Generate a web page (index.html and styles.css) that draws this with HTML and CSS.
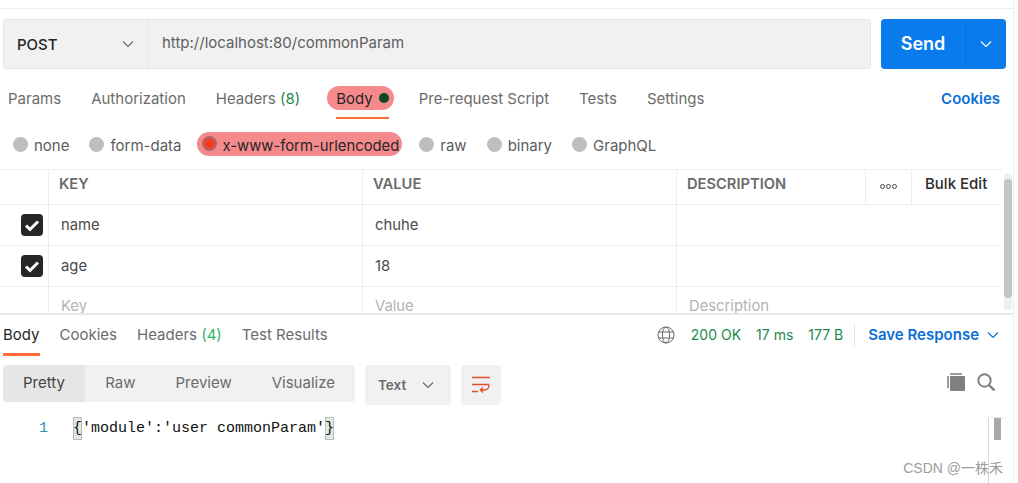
FILE: index.html
```html
<!DOCTYPE html>
<html>
<head>
	<meta charset="utf-8">
	<title>Postman request</title>
	<link rel="stylesheet" href="styles.css">
</head>
<body>
	<div class="page">
		<div class="url-row">
			<div class="url-bar">
				<div class="method">
					<span>POST</span>
					<svg class="chev" width="12" height="12" viewBox="0 0 12 12"><path d="M1 3.500l5 5 5-5"/></svg>
				</div>
				<div class="url">http://localhost:80/commonParam</div>
			</div>
			<div class="send">
				<span class="send-text">Send</span>
				<span class="send-more"><svg class="chev" width="12" height="12" viewBox="0 0 12 12"><path d="M1 3.500l5 5 5-5"/></svg></span>
			</div>
		</div>

		<div class="req-tabs">
			<span class="tab">Params</span>
			<span class="tab">Authorization</span>
			<span class="tab">Headers <em class="count">(8)</em></span>
			<span class="tab tab-body"><span class="mark">Body <i class="dot"></i></span></span>
			<span class="tab">Pre-request Script</span>
			<span class="tab">Tests</span>
			<span class="tab">Settings</span>
			<span class="cookies">Cookies</span>
		</div>

		<div class="radios">
			<span class="radio"><i></i>none</span>
			<span class="radio"><i></i>form-data</span>
			<span class="radio on"><i></i>x-www-form-urlencoded</span>
			<span class="radio"><i></i>raw</span>
			<span class="radio"><i></i>binary</span>
			<span class="radio"><i></i>GraphQL</span>
		</div>

		<div class="table-wrap">
			<div class="table">
				<div class="row head">
					<div class="cell"></div>
					<div class="cell">KEY</div>
					<div class="cell">VALUE</div>
					<div class="cell">DESCRIPTION</div>
					<div class="cell dots"><span></span><span></span><span></span></div>
					<div class="cell bulk">Bulk Edit</div>
				</div>
				<div class="row">
					<div class="cell check"><svg width="22" height="22" viewBox="0 0 22 22"><rect width="22" height="22" rx="4" fill="#262626"/><path d="M5 11.500l4 4 8-8" fill="none" stroke="#fff" stroke-width="3"/></svg></div>
					<div class="cell">name</div>
					<div class="cell">chuhe</div>
					<div class="cell wide"></div>
				</div>
				<div class="row">
					<div class="cell check"><svg width="22" height="22" viewBox="0 0 22 22"><rect width="22" height="22" rx="4" fill="#262626"/><path d="M5 11.500l4 4 8-8" fill="none" stroke="#fff" stroke-width="3"/></svg></div>
					<div class="cell">age</div>
					<div class="cell">18</div>
					<div class="cell wide"></div>
				</div>
				<div class="row ghost">
					<div class="cell"></div>
					<div class="cell">Key</div>
					<div class="cell">Value</div>
					<div class="cell wide">Description</div>
				</div>
			</div>
			<div class="scroll"><div class="thumb"></div></div>
		</div>

		<div class="res-tabs">
			<span class="tab active">Body</span>
			<span class="tab">Cookies</span>
			<span class="tab">Headers <em class="count light">(4)</em></span>
			<span class="tab">Test Results</span>
			<div class="status">
				<svg class="globe" width="18" height="18" viewBox="0 0 18 18"><circle cx="9" cy="9" r="8"/><ellipse cx="9" cy="9" rx="3.600" ry="8"/><path d="M1.600 6h14.800M1.600 12h14.800"/></svg>
				<span>200 OK</span>
				<span>17 ms</span>
				<span>177 B</span>
				<span class="save">Save Response <svg class="chev" width="12" height="12" viewBox="0 0 12 12"><path d="M1 3.500l5 5 5-5"/></svg></span>
			</div>
		</div>

		<div class="toolbar">
			<div class="seg">
				<span class="seg-item active">Pretty</span>
				<span class="seg-item">Raw</span>
				<span class="seg-item">Preview</span>
				<span class="seg-item">Visualize</span>
			</div>
			<div class="format">Text <svg class="chev" width="12" height="12" viewBox="0 0 12 12"><path d="M1 3.500l5 5 5-5"/></svg></div>
			<div class="wrap-btn"><svg width="20" height="20" viewBox="0 0 20 20"><path d="M1 2.500h18M1 9.500h17M1 16.500h6M18 9.500c0 3.500-1 5.500-4.500 5.500H9.500M12 12.500l-2.800 2.500 2.800 2.500"/></svg></div>
			<div class="tools">
				<svg width="18" height="18" viewBox="0 0 18 18"><path d="M3 0h12v2H3z" fill="#9a9a9a"/><path d="M0 3h2v12H0z" fill="#9a9a9a"/><rect x="3" y="3" width="15" height="15" rx="1" fill="#808080"/></svg>
				<svg width="18" height="18" viewBox="0 0 18 18"><circle cx="7.500" cy="7.500" r="6.200" fill="none" stroke="#808080" stroke-width="2"/><path d="M12 12l5.500 5.500" stroke="#808080" stroke-width="2.400"/></svg>
			</div>
		</div>

		<div class="code">
			<span class="ln">1</span>
			<span class="src"><b>{</b>'module':'user commonParam'<b>}</b></span>
		</div>

		<div class="code-scroll"><div class="code-thumb"></div></div>
		<div class="watermark">CSDN @一株禾</div>
	</div>
</body>
</html>
```

FILE: styles.css
```css
*{margin: 0;padding: 0;box-sizing: border-box;}
body{background: #fff;font-family: Inter, "Noto Sans CJK SC", sans-serif;font-size: 15px;color: #6b6b6b;}
.page{width: 1014px;height: 483px;overflow: hidden;position: relative;border-right: 1px solid #ededed;padding-top: 8px;}
.chev{fill: none;stroke: #6b6b6b;stroke-width: 1.2;}

/* url */
.url-row{display: flex;gap: 10px;border-top: 1px solid #ededed;padding: 10px 7px 0 3px;}
.url-bar{width: 868px;height: 50px;display: flex;background: #f1f1f1;border: 1px solid #e6e6e6;border-radius: 4px;}
.method{width: 144px;padding: 0 13px;display: flex;align-items: center;justify-content: space-between;border-right: 1px solid #e6e6e6;font-weight: 500;color: #262626;}
.url{padding-left: 14px;line-height: 46px;color: #5f5f5f;}
.send{width: 125px;height: 50px;display: flex;background: #097bed;border-radius: 4px;color: #fff;font-weight: 600;font-size: 18px;}
.send-text{width: 85px;text-align: center;line-height: 49px;border-right: 1px solid #0a6fd4;}
.send-more{flex: 1;display: flex;align-items: center;justify-content: center;}
.send-more .chev{stroke: #fff;}

/* request tabs */
.req-tabs{display: flex;align-items: center;height: 58px;padding: 0 13px 0 8px;gap: 30px;}
.count{font-style: normal;color: #1d8a4c;}
.count.light{color: #2fb568;}
.tab{white-space: nowrap;position: relative;}
.tab-body{color: #262626;margin-left: -3px;margin-right: -5px;}
.tab-body::after{content: "";position: absolute;left: 9px;right: 5px;bottom: -9px;height: 2px;background: #ff6c37;}
.mark{display: inline-flex;align-items: center;gap: 6px;height: 24px;padding: 0 5px 0 9px;background: #f58a8d;border-radius: 12px;}
.dot{width: 10px;height: 10px;border-radius: 50%;background: #0c4a24;}
.cookies{margin-left: auto;color: #0b6fd6;font-weight: 600;}

/* body type radios */
.radios{display: flex;align-items: center;height: 33px;padding: 4px 0 0 13px;gap: 20px;color: #5c5c5c;}
.radio{display: flex;align-items: center;gap: 6px;white-space: nowrap;}
.radio i{width: 15px;height: 15px;margin-top: -3px;border-radius: 50%;background: #bebebe;}
.radio.on{height: 24px;padding: 4px 3px 0 5px;margin: -4px -3px 0 -5px;background: #f58a8d;border-radius: 12px;color: #262626;font-size: 14.800px;}
.radio.on i{margin-top: -4px;background: radial-gradient(circle, #f83a1c 0 4.500px, #bb5e60 5px);}

/* table */
.table-wrap{height: 146px;margin-top: 9px;position: relative;border-bottom: 2px solid #e9e9e9;overflow: hidden;}
.table{width: 1001px;border-top: 1px solid #ededed;}
.row{display: grid;grid-template-columns: 49px 314px 314px 324px;height: 41px;border-bottom: 1px solid #ededed;}
.row.head{grid-template-columns: 49px 314px 314px 189px 46px 89px;height: 35px;font-weight: 600;}
.cell{border-right: 1px solid #ededed;padding: 0 11px 1px 12px;display: flex;align-items: center;font-size: 14.800px;color: #4a4a4a;}
.head .cell{color: #6b6b6b;font-size: 14.700px;padding: 0 0 6px 10px;}
.head .dots{gap: 1px;justify-content: center;padding: 0 0 2px;}
.dots span{width: 5px;height: 5px;border-radius: 50%;border: 1px solid #444;}
.head .bulk{border-right: 0;color: #2b2b2b;font-weight: 500;font-size: 15px;padding: 0 0 7px 13px;}
.cell:last-child{border-right: 0;}
.check{padding: 0 0 1px 21px;}
.cell.wide{border-right: 0;}
.ghost .cell{color: #b3b3b3;align-items: flex-start;padding-top: 10px;}
.scroll{position: absolute;right: 1px;top: 4px;width: 8px;height: 137px;background: #efefef;border-radius: 4px;}
.thumb{margin-top: 6px;height: 119px;background: #c4c4c4;border-radius: 4px;}

/* response */
.res-tabs{display: flex;align-items: center;height: 40px;padding: 0 14px 1px 3px;gap: 20px;position: relative;}
.res-tabs .active{color: #262626;}
.res-tabs .active::after{content: "";position: absolute;left: 0;right: 0;bottom: -12px;height: 3px;background: #ff6c37;}
.status{margin-left: auto;display: flex;align-items: center;gap: 15px;color: #1d8a4c;font-size: 14px;}
.globe{fill: none;stroke: #6b6b6b;stroke-width: 1;margin-right: 1px;}
.save{display: flex;align-items: center;gap: 8px;height: 24px;margin-left: -4px;padding-left: 13px;border-left: 1px solid #e6e6e6;color: #0b6fd6;font-weight: 600;font-size: 15px;}
.save .chev{stroke: #0b6fd6;}

.toolbar{display: flex;align-items: flex-start;margin-top: 10px;padding: 0 18px 0 3px;gap: 10px;}
.seg{width: 352px;height: 37px;display: flex;background: #f1f1f1;border-radius: 4px;overflow: hidden;line-height: 36px;}
.seg-item{padding: 0 20px;}
.seg-item.active{width: 83px;background: #e6e6e6;color: #444;}
.format{width: 86px;height: 40px;display: flex;align-items: center;gap: 16px;padding: 0 0 1px 13px;background: #f1f1f1;border-radius: 4px;font-weight: 600;font-size: 13.500px;}
.wrap-btn{width: 40px;height: 40px;display: flex;align-items: center;justify-content: center;background: #f1f1f1;border-radius: 4px;}
.wrap-btn path{fill: none;stroke: #e2512a;stroke-width: 1.300;}
.tools{margin-left: auto;display: flex;gap: 12px;height: 34px;align-items: center;}

.code{display: flex;height: 23px;margin-top: 12px;font-family: "Liberation Mono", monospace;font-size: 15px;line-height: 23px;color: #111;}
.ln{width: 73px;padding-left: 39px;color: #2b91af;}
.src b{display: inline-block;height: 23px;font-weight: normal;background: #e2e8e2;outline: 1px solid #b9beb9;outline-offset: -1px;}

.code-scroll{position: absolute;left: 988px;top: 417px;width: 18px;height: 66px;border-left: 1px solid #d8d8d8;border-top: 1px solid #ededed;padding-left: 5px;}
.code-thumb{width: 7px;height: 22px;background: #a9a9a9;}
.watermark{position: absolute;right: 10px;top: 457px;font-family: "Liberation Sans", "Noto Sans CJK SC", sans-serif;font-size: 14px;color: #9c9c9c;white-space: nowrap;}
```
